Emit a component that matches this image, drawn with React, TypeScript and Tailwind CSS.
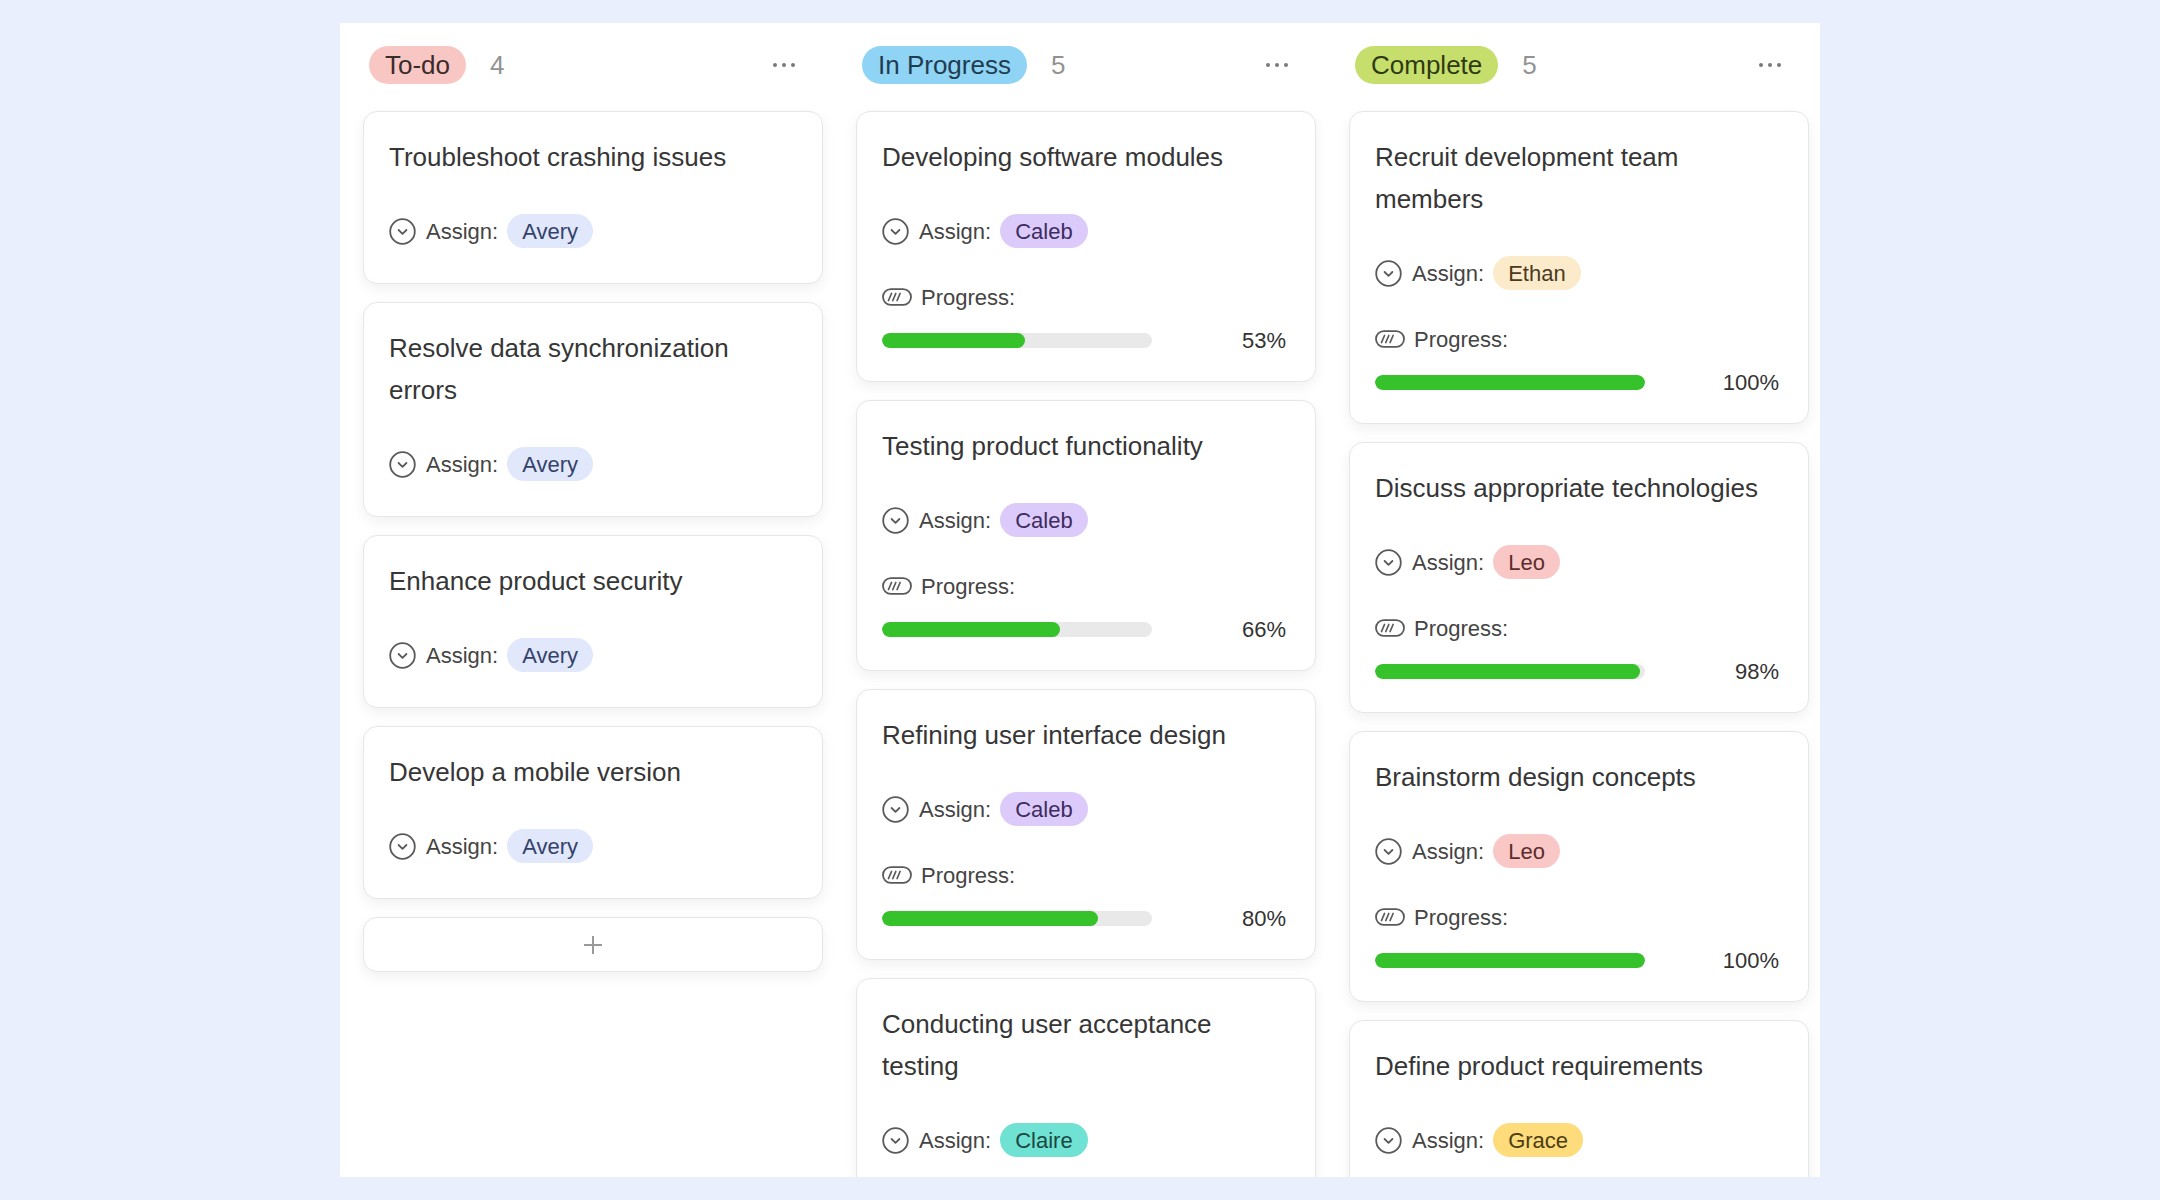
import React from "react";

type Task = {
  title: string;
  name: string;
  nameCls: string;
  progress?: number;
};

type Column = {
  label: string;
  pillCls: string;
  count: number;
  tasks: Task[];
  addButton?: boolean;
};

const avery = "bg-[#e1e8fc] text-[#34426b]";
const caleb = "bg-[#dccbfa] text-[#3c2c60]";
const ethan = "bg-[#fcebcb] text-[#4b3a1f]";
const leo = "bg-[#f9c8c6] text-[#5c2d2d]";
const claire = "bg-[#6fe2d3] text-[#1b4742]";
const grace = "bg-[#fedc7c] text-[#4b3c12]";

const columns: Column[] = [
  {
    label: "To-do",
    pillCls: "bg-[#f9c7c3] text-[#3a2c2c]",
    count: 4,
    addButton: true,
    tasks: [
      { title: "Troubleshoot crashing issues", name: "Avery", nameCls: avery },
      { title: "Resolve data synchronization errors", name: "Avery", nameCls: avery },
      { title: "Enhance product security", name: "Avery", nameCls: avery },
      { title: "Develop a mobile version", name: "Avery", nameCls: avery },
    ],
  },
  {
    label: "In Progress",
    pillCls: "bg-[#8fd3f5] text-[#1f3d50]",
    count: 5,
    tasks: [
      { title: "Developing software modules", name: "Caleb", nameCls: caleb, progress: 53 },
      { title: "Testing product functionality", name: "Caleb", nameCls: caleb, progress: 66 },
      { title: "Refining user interface design", name: "Caleb", nameCls: caleb, progress: 80 },
      { title: "Conducting user acceptance testing", name: "Claire", nameCls: claire, progress: 90 },
      { title: "Preparing release notes", name: "Claire", nameCls: claire, progress: 40 },
    ],
  },
  {
    label: "Complete",
    pillCls: "bg-[#c6df6c] text-[#2f3a14]",
    count: 5,
    tasks: [
      { title: "Recruit development team members", name: "Ethan", nameCls: ethan, progress: 100 },
      { title: "Discuss appropriate technologies", name: "Leo", nameCls: leo, progress: 98 },
      { title: "Brainstorm design concepts", name: "Leo", nameCls: leo, progress: 100 },
      { title: "Define product requirements", name: "Grace", nameCls: grace, progress: 100 },
      { title: "Finalize project scope", name: "Grace", nameCls: grace, progress: 100 },
    ],
  },
];

function AssignIcon() {
  return (
    <svg width="27" height="27" viewBox="0 0 27 27" fill="none" className="shrink-0">
      <circle cx="13.5" cy="13.5" r="12.3" stroke="#5a5a5a" strokeWidth="1.8" />
      <path d="M9.6 12 L13.5 15.9 L17.4 12" stroke="#5a5a5a" strokeWidth="1.8" strokeLinecap="round" strokeLinejoin="round" />
    </svg>
  );
}

function ProgressIcon() {
  return (
    <svg width="30" height="18" viewBox="0 0 30 18" fill="none" className="shrink-0">
      <rect x="1" y="1.2" width="28" height="15.6" rx="7.8" stroke="#5a5a5a" strokeWidth="1.8" />
      <path d="M6.5 12.5 L9.5 5.5 M10.8 12.5 L13.8 5.5 M15.1 12.5 L18.1 5.5" stroke="#5a5a5a" strokeWidth="1.7" strokeLinecap="round" />
    </svg>
  );
}

function Dots() {
  return (
    <div className="flex items-center gap-[5px]">
      <span className="w-[4px] h-[4px] rounded-full bg-[#7a7a7a]" />
      <span className="w-[4px] h-[4px] rounded-full bg-[#7a7a7a]" />
      <span className="w-[4px] h-[4px] rounded-full bg-[#7a7a7a]" />
    </div>
  );
}

function Card({ task }: { task: Task }) {
  const hasProgress = typeof task.progress === "number";
  return (
    <div
      className={`bg-white border border-[#e6e6e6] rounded-[14px] shadow-[0_5px_14px_rgba(0,0,0,0.06)] pl-[25px] pr-[29px] pt-[24px] ${
        hasProgress ? "pb-[24px]" : "pb-[35px]"
      }`}
    >
      <div className="text-[26px] leading-[42px] text-[#363636]">{task.title}</div>
      <div className="mt-[36px] h-[34px] flex items-center">
        <AssignIcon />
        <span className="ml-[10px] text-[22px] text-[#444]">Assign:</span>
        <span className={`ml-[9px] h-[34px] px-[15px] rounded-full flex items-center text-[22px] ${task.nameCls}`}>
          {task.name}
        </span>
      </div>
      {hasProgress && (
        <>
          <div className="mt-[32px] h-[34px] flex items-center">
            <ProgressIcon />
            <span className="ml-[9px] text-[22px] text-[#444]">Progress:</span>
          </div>
          <div className="mt-[9px] h-[34px] flex items-center justify-between">
            <div className="w-[270px] h-[15px] rounded-full bg-[#e9e9e9] overflow-hidden">
              <div className="h-full rounded-full bg-[#35c22b]" style={{ width: `${task.progress}%` }} />
            </div>
            <span className="text-[22px] text-[#333]">{task.progress}%</span>
          </div>
        </>
      )}
    </div>
  );
}

export default function App() {
  return (
    <div
      className="min-h-screen bg-[#e9effc] flex justify-center pt-[23px]"
      style={{ fontFamily: '"Liberation Sans", Arial, sans-serif' }}
    >
      <div className="w-[1480px] h-[1154px] bg-white overflow-hidden pl-[23px] pt-[23px]">
        <div className="grid grid-cols-[460px_460px_460px] gap-x-[33px] items-start">
          {columns.map((col) => (
            <div key={col.label} className="flex flex-col">
              <div className="h-[38px] flex items-center justify-between pl-[6px] pr-[28px]">
                <div className="flex items-center">
                  <span className={`h-[38px] px-[16px] rounded-full flex items-center text-[26px] ${col.pillCls}`}>
                    {col.label}
                  </span>
                  <span className="ml-[24px] text-[26px] text-[#929292]">{col.count}</span>
                </div>
                <Dots />
              </div>
              <div className="mt-[27px] flex flex-col gap-[18px]">
                {col.tasks.map((t, i) => (
                  <Card key={i} task={t} />
                ))}
                {col.addButton && (
                  <div className="h-[55px] bg-white border border-[#e6e6e6] rounded-[14px] shadow-[0_5px_14px_rgba(0,0,0,0.06)] flex items-center justify-center">
                    <svg width="20" height="20" viewBox="0 0 20 20">
                      <path d="M10 1 V19 M1 10 H19" stroke="#9a9a9a" strokeWidth="2" />
                    </svg>
                  </div>
                )}
              </div>
            </div>
          ))}
        </div>
      </div>
    </div>
  );
}
